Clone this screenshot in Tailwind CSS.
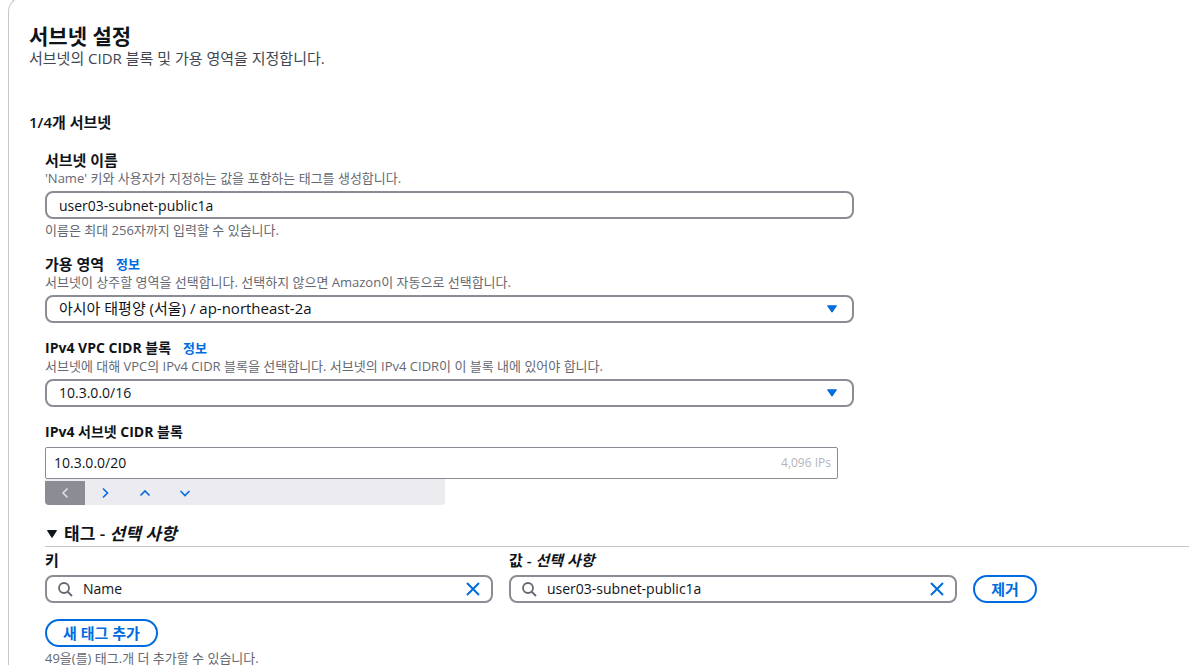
<!DOCTYPE html>
<html lang="ko">
<head>
  <meta charset="UTF-8">
  <meta name="viewport" content="width=device-width, initial-scale=1.0">
  <title>서브넷 생성</title>
  <script src="https://cdn.jsdelivr.net/npm/@tailwindcss/browser@4"></script>
  <style>
    body { font-family: 'Open Sans', 'Noto Sans CJK KR', sans-serif; }
  </style>
</head>
<body class="h-screen overflow-hidden bg-white text-[#0f141a] text-sm">

<main class="pl-2 h-full">
  <section class="-mt-1 min-h-full border-t border-l border-[#c6c6cd] rounded-tl-2xl pl-5">
    <header class="pt-[27px]">
      <h2 class="text-[21px] leading-6 font-semibold">서브넷 설정</h2>
      <p class="text-[15px] leading-5 text-[#424650]">서브넷의 CIDR 블록 및 가용 영역을 지정합니다.</p>
    </header>

    <form class="mt-11">
      <h3 class="text-[15px] leading-5 font-semibold">1/4개 서브넷</h3>

      <div class="pl-4 mt-[18px]">
        <div class="max-w-[809px] space-y-[15px]">
          <!-- 서브넷 이름 -->
          <div class="pb-px">
            <label for="subnet-name" class="block text-[15px] leading-5 font-semibold">서브넷 이름</label>
            <p class="text-[13px] leading-4 text-[#656871]">'Name' 키와 사용자가 지정하는 값을 포함하는 태그를 생성합니다.</p>
            <input type="text" id="subnet-name" value="user03-subnet-public1a" class="block mt-[5px] w-full h-7 px-3 border-2 border-[#8c8c94] rounded-lg">
            <p class="mt-[3px] text-[13px] leading-4 text-[#656871]">이름은 최대 256자까지 입력할 수 있습니다.</p>
          </div>

          <!-- 가용 영역 -->
          <div>
            <div class="flex items-center gap-3 leading-5">
              <label for="az" class="text-[15px] leading-5 font-semibold">가용 영역</label>
              <a href="#" class="text-[13px] leading-5 font-semibold text-[#006ce0]">정보</a>
            </div>
            <p class="text-[13px] leading-4 text-[#656871]">서브넷이 상주할 영역을 선택합니다. 선택하지 않으면 Amazon이 자동으로 선택합니다.</p>
            <div class="relative mt-[5px]">
              <select id="az" class="block appearance-none w-full h-7 px-3 border-2 border-[#8c8c94] rounded-lg bg-white text-[15px]">
                <option>아시아 태평양 (서울) / ap-northeast-2a</option>
              </select>
              <svg class="absolute right-4 top-2.5 w-3 h-2 pointer-events-none" viewBox="0 0 12 8"><path d="M1.5 .8h9L6 7.2z" fill="#006ce0" stroke="#006ce0" stroke-linejoin="round"/></svg>
            </div>
          </div>

          <!-- VPC CIDR -->
          <div>
            <div class="flex items-center gap-3 leading-5">
              <label for="vpc-cidr" class="font-bold">IPv4 VPC CIDR 블록</label>
              <a href="#" class="text-[13px] leading-5 font-semibold text-[#006ce0]">정보</a>
            </div>
            <p class="text-[13px] leading-4 text-[#656871]">서브넷에 대해 VPC의 IPv4 CIDR 블록을 선택합니다. 서브넷의 IPv4 CIDR이 이 블록 내에 있어야 합니다.</p>
            <div class="relative mt-[5px]">
              <select id="vpc-cidr" class="block appearance-none w-full h-7 px-3 border-2 border-[#8c8c94] rounded-lg bg-white">
                <option>10.3.0.0/16</option>
              </select>
              <svg class="absolute right-4 top-2.5 w-3 h-2 pointer-events-none" viewBox="0 0 12 8"><path d="M1.5 .8h9L6 7.2z" fill="#006ce0" stroke="#006ce0" stroke-linejoin="round"/></svg>
            </div>
          </div>

          <!-- 서브넷 CIDR -->
          <div class="pr-4">
            <label for="subnet-cidr" class="block leading-5 font-bold">IPv4 서브넷 CIDR 블록</label>
            <div class="mt-[5px] flex items-center h-8 border border-[#8c8c94] rounded-xs pl-2 pr-1.5">
              <input type="text" id="subnet-cidr" value="10.3.0.0/20" class="flex-1 min-w-0">
              <span class="text-xs text-[#b4b4bb]">4,096 IPs</span>
            </div>
            <div class="flex items-end w-[400px] h-[26px] bg-[#ebebf0] rounded-b-sm overflow-hidden">
              <button type="button" disabled aria-label="이전" class="w-10 h-6 flex items-center justify-center bg-[#8c8c94]">
                <svg class="w-3 h-3" viewBox="0 0 12 12" fill="none" stroke="#dedee3" stroke-width="1.6"><path d="M8.5 1.5 4 6l4.5 4.5"/></svg>
              </button>
              <button type="button" aria-label="다음" class="w-10 h-6 flex items-center justify-center">
                <svg class="w-3 h-3" viewBox="0 0 12 12" fill="none" stroke="#006ce0" stroke-width="1.6"><path d="M4 1.5 8.5 6 4 10.5"/></svg>
              </button>
              <button type="button" aria-label="위로" class="w-10 h-6 flex items-center justify-center">
                <svg class="w-3 h-3" viewBox="0 0 12 12" fill="none" stroke="#006ce0" stroke-width="1.6"><path d="M1.5 8.5 6 4l4.5 4.5"/></svg>
              </button>
              <button type="button" aria-label="아래로" class="w-10 h-6 flex items-center justify-center">
                <svg class="w-3 h-3" viewBox="0 0 12 12" fill="none" stroke="#006ce0" stroke-width="1.6"><path d="M1.5 4 6 8.5 10.5 4"/></svg>
              </button>
            </div>
          </div>
        </div>

        <!-- 태그 -->
        <div class="mt-4">
          <button type="button" aria-expanded="true" class="flex items-center gap-1.5 w-full h-[26px] pt-0.5 pl-px border-b border-[#c6c6cd] text-[17px] font-semibold">
            <svg class="w-3 h-3" viewBox="0 0 12 12"><path d="M1.5 1.5h9L6 8.5z" fill="#0f141a" stroke="#0f141a" stroke-linejoin="round"/></svg>
            <span>태그 - <i>선택 사항</i></span>
          </button>

          <div class="flex items-end gap-4 mt-[3px]">
            <div class="w-[448px]">
              <label for="tag-key" class="block text-[15px] leading-5 font-semibold">키</label>
              <div class="mt-[5px] flex items-center gap-2.5 h-7 px-2.5 border-2 border-[#8c8c94] rounded-lg">
                <svg class="w-4 h-4" viewBox="0 0 16 16" fill="none" stroke="#656871" stroke-width="1.8"><circle cx="7" cy="7" r="5"/><path d="m10.5 10.5 4.5 4.5"/></svg>
                <input type="text" id="tag-key" value="Name" class="flex-1 min-w-0">
                <button type="button" aria-label="지우기">
                  <svg class="w-4 h-4" viewBox="0 0 16 16" fill="none" stroke="#006ce0" stroke-width="2"><path d="m2 2 12 12M14 2 2 14"/></svg>
                </button>
              </div>
            </div>
            <div class="w-[448px]">
              <label for="tag-value" class="block text-[15px] leading-5 font-semibold">값 - <i>선택 사항</i></label>
              <div class="mt-[5px] flex items-center gap-2.5 h-7 px-2.5 border-2 border-[#8c8c94] rounded-lg">
                <svg class="w-4 h-4" viewBox="0 0 16 16" fill="none" stroke="#656871" stroke-width="1.8"><circle cx="7" cy="7" r="5"/><path d="m10.5 10.5 4.5 4.5"/></svg>
                <input type="text" id="tag-value" value="user03-subnet-public1a" class="flex-1 min-w-0">
                <button type="button" aria-label="지우기">
                  <svg class="w-4 h-4" viewBox="0 0 16 16" fill="none" stroke="#006ce0" stroke-width="2"><path d="m2 2 12 12M14 2 2 14"/></svg>
                </button>
              </div>
            </div>
            <button type="button" class="h-7 w-16 border-2 border-[#006ce0] rounded-full text-[#006ce0] text-[15px] font-semibold leading-5">제거</button>
          </div>

          <button type="button" class="block mt-4 h-7 px-4 border-2 border-[#006ce0] rounded-full text-[#006ce0] text-[15px] font-semibold leading-5">새 태그 추가</button>
          <p class="mt-[3px] text-[13px] leading-4 text-[#656871]">49을(를) 태그.개 더 추가할 수 있습니다.</p>
        </div>
      </div>
    </form>
  </section>
</main>

</body>
</html>
